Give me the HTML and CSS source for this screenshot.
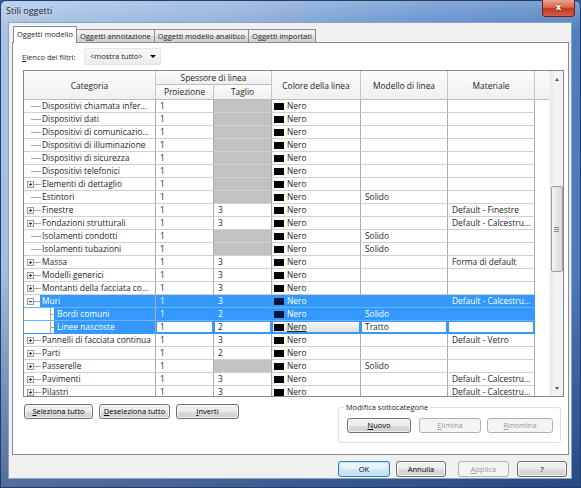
FILE: index.html
```html
<!DOCTYPE html>
<html lang="it">
<head>
  <meta charset="UTF-8" />
  <title>Stili oggetti</title>
  <link rel="stylesheet" href="styles.css">
</head>
<body>

<div class="window">
  <div class="titlebar">
    <span class="title">Stili oggetti</span>
    <div class="close">x</div>
  </div>

  <div class="client">
    <!-- Tabs -->
    <div class="tabs">
      <div class="tab active">Oggetti modello</div>
      <div class="tab">Oggetti annotazione</div>
      <div class="tab">Oggetti modello analitico</div>
      <div class="tab">Oggetti importati</div>
    </div>

    <div class="panel">
      <div class="filter-row">
        <span class="filter-label"><u>E</u>lenco dei filtri:</span>
        <div class="combo">&lt;mostra tutto&gt;<i class="combo-arrow"></i></div>
      </div>

      <!-- Categories grid -->
      <div class="grid">
        <div class="grid-body">
          <table>
            <colgroup>
              <col class="c-cat"><col class="c-proj"><col class="c-cut"><col class="c-color"><col class="c-pattern"><col class="c-mat"><col class="c-pad">
            </colgroup>
            <thead>
              <tr class="h1">
                <th rowspan="2">Categoria</th>
                <th colspan="2">Spessore di linea</th>
                <th rowspan="2">Colore della linea</th>
                <th rowspan="2">Modello di linea</th>
                <th rowspan="2">Materiale</th>
                <th rowspan="2" class="pad"></th>
              </tr>
              <tr class="h2">
                <th>Proiezione</th>
                <th>Taglio</th>
              </tr>
            </thead>
            <tbody>
              <tr><td class="cat"><div class="node"><i class="exp"></i><span class="lbl">Dispositivi chiamata infer...</span></div></td><td>1</td><td class="off"></td><td class="color"><i class="swatch"></i>Nero</td><td></td><td></td><td class="pad"></td></tr>
              <tr><td class="cat"><div class="node"><i class="exp"></i><span class="lbl">Dispositivi dati</span></div></td><td>1</td><td class="off"></td><td class="color"><i class="swatch"></i>Nero</td><td></td><td></td><td class="pad"></td></tr>
              <tr><td class="cat"><div class="node"><i class="exp"></i><span class="lbl">Dispositivi di comunicazio...</span></div></td><td>1</td><td class="off"></td><td class="color"><i class="swatch"></i>Nero</td><td></td><td></td><td class="pad"></td></tr>
              <tr><td class="cat"><div class="node"><i class="exp"></i><span class="lbl">Dispositivi di illuminazione</span></div></td><td>1</td><td class="off"></td><td class="color"><i class="swatch"></i>Nero</td><td></td><td></td><td class="pad"></td></tr>
              <tr><td class="cat"><div class="node"><i class="exp"></i><span class="lbl">Dispositivi di sicurezza</span></div></td><td>1</td><td class="off"></td><td class="color"><i class="swatch"></i>Nero</td><td></td><td></td><td class="pad"></td></tr>
              <tr><td class="cat"><div class="node"><i class="exp"></i><span class="lbl">Dispositivi telefonici</span></div></td><td>1</td><td class="off"></td><td class="color"><i class="swatch"></i>Nero</td><td></td><td></td><td class="pad"></td></tr>
              <tr><td class="cat"><div class="node"><i class="exp plus"></i><span class="lbl">Elementi di dettaglio</span></div></td><td>1</td><td class="off"></td><td class="color"><i class="swatch"></i>Nero</td><td></td><td></td><td class="pad"></td></tr>
              <tr><td class="cat"><div class="node"><i class="exp"></i><span class="lbl">Estintori</span></div></td><td>1</td><td class="off"></td><td class="color"><i class="swatch"></i>Nero</td><td>Solido</td><td></td><td class="pad"></td></tr>
              <tr><td class="cat"><div class="node"><i class="exp plus"></i><span class="lbl">Finestre</span></div></td><td>1</td><td>3</td><td class="color"><i class="swatch"></i>Nero</td><td></td><td>Default - Finestre</td><td class="pad"></td></tr>
              <tr><td class="cat"><div class="node"><i class="exp plus"></i><span class="lbl">Fondazioni strutturali</span></div></td><td>1</td><td>3</td><td class="color"><i class="swatch"></i>Nero</td><td></td><td>Default - Calcestru...</td><td class="pad"></td></tr>
              <tr><td class="cat"><div class="node"><i class="exp"></i><span class="lbl">Isolamenti condotti</span></div></td><td>1</td><td class="off"></td><td class="color"><i class="swatch"></i>Nero</td><td>Solido</td><td></td><td class="pad"></td></tr>
              <tr><td class="cat"><div class="node"><i class="exp"></i><span class="lbl">Isolamenti tubazioni</span></div></td><td>1</td><td class="off"></td><td class="color"><i class="swatch"></i>Nero</td><td>Solido</td><td></td><td class="pad"></td></tr>
              <tr><td class="cat"><div class="node"><i class="exp plus"></i><span class="lbl">Massa</span></div></td><td>1</td><td>3</td><td class="color"><i class="swatch"></i>Nero</td><td></td><td>Forma di default</td><td class="pad"></td></tr>
              <tr><td class="cat"><div class="node"><i class="exp plus"></i><span class="lbl">Modelli generici</span></div></td><td>1</td><td>3</td><td class="color"><i class="swatch"></i>Nero</td><td></td><td></td><td class="pad"></td></tr>
              <tr><td class="cat"><div class="node"><i class="exp plus"></i><span class="lbl">Montanti della facciata co...</span></div></td><td>1</td><td>3</td><td class="color"><i class="swatch"></i>Nero</td><td></td><td></td><td class="pad"></td></tr>
              <tr class="sel"><td class="cat"><div class="node"><i class="exp minus"></i><span class="lbl">Muri</span></div></td><td>1</td><td>3</td><td class="color"><i class="swatch"></i>Nero</td><td></td><td>Default - Calcestru...</td><td class="pad"></td></tr>
              <tr class="sel"><td class="cat"><div class="node child"><span class="lbl">Bordi comuni</span></div></td><td>1</td><td>2</td><td class="color"><i class="swatch"></i>Nero</td><td>Solido</td><td></td><td class="pad"></td></tr>
              <tr class="edit"><td class="cat"><div class="node child last"><span class="lbl">Linee nascoste</span></div></td><td>1</td><td>2</td><td class="color picker"><i class="swatch"></i><u>Nero</u></td><td>Tratto</td><td></td><td class="pad"></td></tr>
              <tr><td class="cat"><div class="node"><i class="exp plus"></i><span class="lbl">Pannelli di facciata continua</span></div></td><td>1</td><td>3</td><td class="color"><i class="swatch"></i>Nero</td><td></td><td>Default - Vetro</td><td class="pad"></td></tr>
              <tr><td class="cat"><div class="node"><i class="exp plus"></i><span class="lbl">Parti</span></div></td><td>1</td><td>2</td><td class="color"><i class="swatch"></i>Nero</td><td></td><td></td><td class="pad"></td></tr>
              <tr><td class="cat"><div class="node"><i class="exp plus"></i><span class="lbl">Passerelle</span></div></td><td>1</td><td class="off"></td><td class="color"><i class="swatch"></i>Nero</td><td>Solido</td><td></td><td class="pad"></td></tr>
              <tr><td class="cat"><div class="node"><i class="exp plus"></i><span class="lbl">Pavimenti</span></div></td><td>1</td><td>3</td><td class="color"><i class="swatch"></i>Nero</td><td></td><td>Default - Calcestru...</td><td class="pad"></td></tr>
              <tr><td class="cat"><div class="node"><i class="exp plus"></i><span class="lbl">Pilastri</span></div></td><td>1</td><td>3</td><td class="color"><i class="swatch"></i>Nero</td><td></td><td>Default - Calcestru...</td><td class="pad"></td></tr>
            </tbody>
          </table>
        </div>

        <div class="vscroll">
          <div class="sb-arrow up"></div>
          <div class="sb-thumb"></div>
          <div class="sb-arrow down"></div>
        </div>
      </div>

      <div class="under-grid">
        <div class="sel-buttons">
          <div class="btn"><u>S</u>eleziona tutto</div>
          <div class="btn"><u>D</u>eseleziona tutto</div>
          <div class="btn"><u>I</u>nverti</div>
        </div>

        <fieldset class="subcat">
          <legend>Modifica sottocategorie</legend>
          <div class="subcat-buttons">
            <div class="btn"><u>N</u>uovo</div>
            <div class="btn disabled"><u>E</u>limina</div>
            <div class="btn disabled"><u>R</u>inomina</div>
          </div>
        </fieldset>
      </div>
    </div>

    <div class="dialog-buttons">
      <div class="btn default">OK</div>
      <div class="btn">Annulla</div>
      <div class="btn disabled apply"><u>A</u>pplica</div>
      <div class="btn help">?</div>
    </div>
  </div>
</div>

</body>
</html>
```

FILE: styles.css
```css
* {
  margin: 0;
  padding: 0;
  box-sizing: border-box;
}

body {
  width: 581px;
  height: 488px;
  overflow: hidden;
  background: #2f5d9c;
  font-family: 'Open Sans', 'Noto Sans', sans-serif;
  font-size: 7.5px;
  color: #1e1e1e;
}

u {
  text-decoration: underline;
}

/* Window frame (glass look) */
.window {
  width: 581px;
  height: 488px;
  padding: 0 8px 8px 7px;
  display: flex;
  flex-direction: column;
  border: 1px solid #1d3e6e;
  border-radius: 6px 6px 0 0;
  background:
    linear-gradient(180deg, rgba(255,255,255,0.25) 0, rgba(255,255,255,0) 30px),
    linear-gradient(180deg, rgba(0,0,0,0) 55%, rgba(10,30,80,0.5) 100%),
    linear-gradient(100deg, #a9c3e5 0%, #8badda 35%, #5f8ecb 65%, #4676b9 100%);
}

.titlebar {
  height: 21px;
  display: flex;
  align-items: flex-start;
  margin: 0 -3px 0 -2px;
}

.title {
  font-size: 9px;
  color: #15233a;
  margin-top: 3px;
  text-shadow: 0 0 6px rgba(255,255,255,0.8);
}

.close {
  margin-left: auto;
  width: 33px;
  height: 17px;
  margin-top: -1px;
  border: 1px solid #6b2219;
  border-top: none;
  border-radius: 0 0 4px 4px;
  background: linear-gradient(180deg, #e9a593 0%, #d8684f 45%, #c2371f 55%, #d2604a 100%);
  color: #fff;
  font-family: 'DejaVu Sans', sans-serif;
  font-weight: bold;
  font-size: 9px;
  text-align: center;
  line-height: 15px;
  text-shadow: 0 0 2px #5a1008;
}

.client {
  flex: 1;
  background: #f0f0f0;
  border: 1px solid #8ea3c2;
  display: flex;
  flex-direction: column;
}

/* Tabs */
.tabs {
  display: flex;
  align-items: flex-end;
  height: 16px;
  margin: 3px 0 0 4px;
  position: relative;
  z-index: 1;
}

.tab {
  height: 13px;
  padding: 0 3px;
  line-height: 12px;
  border: 1px solid #898c95;
  border-bottom: none;
  margin-left: -1px;
  background: linear-gradient(180deg, #f3f3f3 0%, #ebebeb 50%, #dddddd 51%, #cfcfcf 100%);
  white-space: nowrap;
}

.tab.active {
  height: 17px;
  margin-left: 0;
  margin-bottom: -1px;
  background: #fff;
  padding: 0 3px;
  line-height: 15px;
}

.panel {
  margin-left: 3px;
  width: 557px;
  height: 413px;
  border: 1px solid #898c95;
  background: #fff;
}

.filter-row {
  display: flex;
  align-items: center;
  height: 17px;
  margin-top: 5px;
}

.filter-label {
  width: 71px;
  padding-left: 9px;
}

.combo {
  width: 77px;
  height: 17px;
  border: 1px solid #e4e4e4;
  border-radius: 2px;
  background: linear-gradient(180deg, #f7f7f7, #ececec);
  padding-left: 5px;
  line-height: 15px;
  display: flex;
  align-items: center;
}

.combo-arrow {
  margin-left: auto;
  margin-right: 4px;
  width: 0;
  height: 0;
  border-left: 3px solid transparent;
  border-right: 3px solid transparent;
  border-top: 3px solid #000;
}

/* Grid */
.grid {
  display: flex;
  margin: 5px 0 0 10px;
  width: 541px;
  height: 327px;
  border: 1px solid #828790;
  background: #fff;
}

.grid-body {
  flex: 1;
  overflow: hidden;
}

table {
  border-collapse: separate;
  border-spacing: 0;
  table-layout: fixed;
  width: 525px;
  font-size: 8.4px;
}

.c-cat { width: 132px; }
.c-proj { width: 58px; }
.c-cut { width: 58px; }
.c-color { width: 89px; }
.c-pattern { width: 87px; }
.c-mat { width: 87px; }
.c-pad { width: 14px; }

th {
  font-weight: normal;
  background: linear-gradient(180deg, #fbfbfb, #f0f0f0);
  border-right: 1px solid #c8c8c8;
  border-bottom: 1px solid #bdbdbd;
  color: #1e1e1e;
  white-space: nowrap;
}

tr.h1 th {
  height: 14px;
  line-height: 13px;
}

tr.h2 th {
  height: 15px;
  line-height: 14px;
}

th.pad {
  border-right: none;
}

td {
  height: 13px;
  line-height: 12px;
  padding: 0 0 0 4px;
  border-right: 1px solid #ababab;
  border-bottom: 1px solid #d0d0d0;
  white-space: nowrap;
  overflow: hidden;
  color: #1e1e1e;
}

td.pad {
  border: none;
}

td.off {
  background: #c2c2c2;
}

td.color {
  padding-left: 2px;
}

.swatch {
  display: inline-block;
  width: 10px;
  height: 7px;
  background: #000;
  margin-right: 3px;
  vertical-align: -1px;
}

/* Tree column */
td.cat {
  padding: 0;
}

.node {
  display: flex;
  height: 12px;
  align-items: center;
  padding-left: 3px;
  background: linear-gradient(#a8a8a8, #a8a8a8) 7px 6px / 10px 1px no-repeat;
}

.exp {
  width: 7px;
  height: 7px;
  margin-right: 6px;
  flex-shrink: 0;
}

.exp.plus,
.exp.minus {
  border: 1px solid #9c9c9c;
  background:
    linear-gradient(#3c3c3c, #3c3c3c) center / 3px 1px no-repeat,
    linear-gradient(180deg, #fff, #e8e8e8);
}

.exp.plus {
  background:
    linear-gradient(#3c3c3c, #3c3c3c) center / 3px 1px no-repeat,
    linear-gradient(#3c3c3c, #3c3c3c) center / 1px 3px no-repeat,
    linear-gradient(180deg, #fff, #e8e8e8);
}

.lbl {
  flex: 1;
  align-self: stretch;
  padding-left: 2px;
  line-height: 12px;
  overflow: hidden;
}

.node.child {
  padding-left: 30px;
  background:
    linear-gradient(#a8a8a8, #a8a8a8) 26px 0 / 1px 12px no-repeat,
    linear-gradient(#a8a8a8, #a8a8a8) 26px 6px / 5px 1px no-repeat;
}

.node.child .lbl {
  padding-left: 3px;
}

/* Selected rows */
tr.sel td,
tr.sel .lbl,
tr.edit .lbl {
  background: #3399ff;
  color: #fff;
}

tr.sel td {
  border-right-color: #3399ff;
  border-bottom-color: #6bb5ff;
}

tr.sel td.cat,
tr.edit td.cat {
  background: #fff;
  border-right-color: #ababab;
}

tr.sel td.pad {
  background: #fff;
}

tr.sel .swatch {
  background: #06133a;
}

tr.edit td {
  border-bottom-color: #3399ff;
}

tr.edit td:not(.cat):not(.pad) {
  box-shadow: inset 0 0 0 1px #3399ff;
  border-right-color: #3399ff;
}

td.picker {
  background: linear-gradient(180deg, #fafafa, #dedede);
}

/* Scrollbar */
.vscroll {
  width: 14px;
  display: flex;
  flex-direction: column;
  align-items: center;
  background: linear-gradient(90deg, #e8e8e8, #f5f5f5 40%, #f0f0f0);
  border-left: 1px solid #f7f7f7;
}

.sb-arrow {
  height: 16px;
  width: 100%;
  display: flex;
  align-items: center;
  justify-content: center;
}

.sb-arrow::after {
  content: '';
  border-left: 2px solid transparent;
  border-right: 2px solid transparent;
}

.sb-arrow.up::after {
  border-bottom: 3px solid #4f5b6b;
}

.sb-arrow.down::after {
  border-top: 3px solid #4f5b6b;
}

.sb-thumb {
  margin-top: 99px;
  width: 12px;
  height: 86px;
  border: 1px solid #9b9b9b;
  border-radius: 2px;
  background: linear-gradient(90deg, #f6f6f6, #e6e6e6 50%, #d8d8d8);
  display: flex;
  align-items: center;
  justify-content: center;
}

.sb-thumb::after {
  content: '';
  width: 5px;
  height: 5px;
  background: repeating-linear-gradient(180deg, #8a8a8a 0, #8a8a8a 1px, transparent 1px, transparent 2px);
}

.vscroll .down {
  margin-top: auto;
}

/* Buttons */
.btn {
  height: 15px;
  border: 1px solid #707070;
  border-radius: 3px;
  background: linear-gradient(180deg, #f2f2f2 0%, #ebebeb 50%, #dddddd 51%, #cfcfcf 100%);
  box-shadow: inset 0 0 0 1px rgba(255,255,255,0.7);
  text-align: center;
  line-height: 13px;
  color: #000;
  white-space: nowrap;
}

.btn.disabled {
  border-color: #adb2b5;
  background: #f4f4f4;
  color: #9a9a9a;
  box-shadow: none;
}

.btn.default {
  border-color: #3c7fb1;
  background: linear-gradient(180deg, #eef7fc 0%, #e2f1fa 50%, #cfe8f6 51%, #c1e1f3 100%);
  box-shadow: inset 0 0 0 1px #b8e3f8;
}

.under-grid {
  display: flex;
  margin-top: 5px;
}

.sel-buttons {
  display: grid;
  grid-template-columns: 69px 71px 63px;
  column-gap: 6px;
  margin: 2px 0 0 11px;
  align-self: flex-start;
}

.subcat {
  margin-left: auto;
  margin-right: 7px;
  width: 223px;
  height: 41px;
  border: 1px solid #d5dfe5;
  border-radius: 3px;
  padding: 0 0 0 8px;
}

.subcat legend {
  padding: 0 2px;
  margin-left: -3px;
  line-height: 10px;
}

.subcat-buttons {
  display: grid;
  grid-template-columns: 64px 62px 64px;
  column-gap: 8px;
  margin-top: 6px;
}

.subcat-buttons .btn:last-child {
  margin-left: -2px;
}

.dialog-buttons {
  display: flex;
  justify-content: flex-end;
  margin: 6px 4px 0 0;
}

.dialog-buttons .btn {
  height: 16px;
  line-height: 14px;
  width: 50px;
}

.dialog-buttons .default { width: 52px; }

.dialog-buttons .btn + .btn {
  margin-left: 6px;
}

.dialog-buttons .btn.apply {
  margin-left: 12px;
  width: 51px;
}

.dialog-buttons .btn.help {
  margin-left: 8px;
}
```
